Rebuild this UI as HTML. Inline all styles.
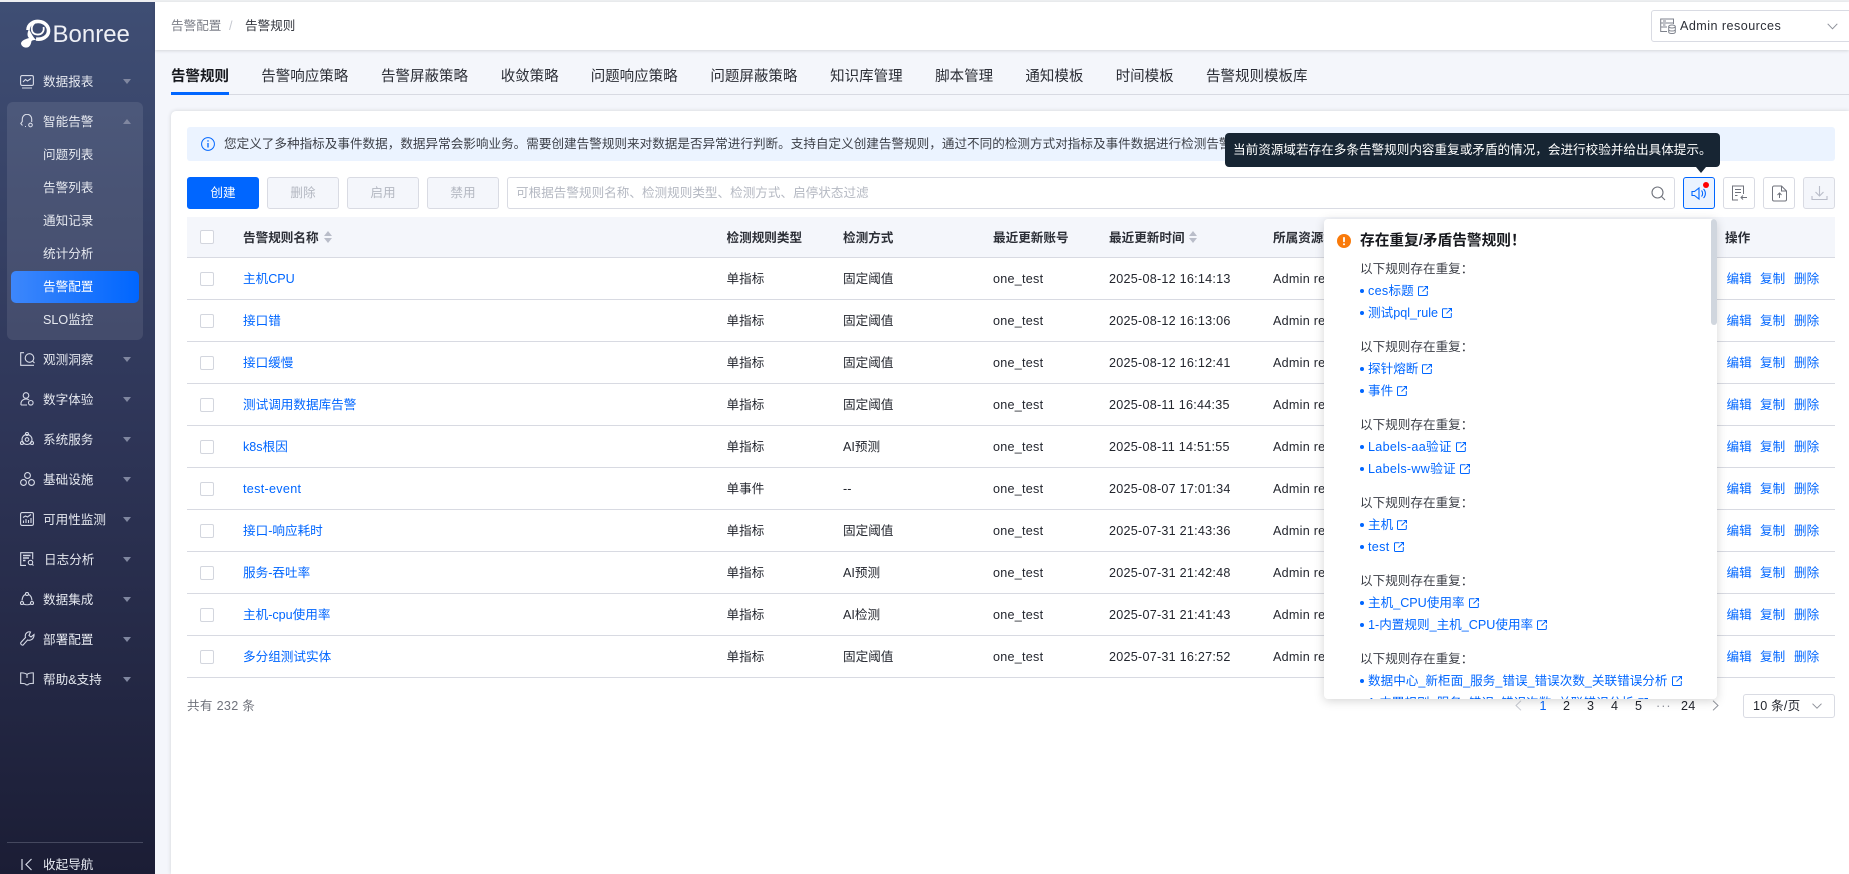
<!DOCTYPE html>
<html lang="zh-CN">
<head>
<meta charset="utf-8">
<title>告警规则</title>
<style>
*{box-sizing:border-box}
html,body{margin:0;padding:0;width:1849px;height:874px;overflow:hidden;background:#f4f6fb;font-family:"Liberation Sans","Noto Sans CJK SC",sans-serif;font-size:12.6px;color:#23262e}
div,span,svg{position:absolute}
#root{left:0;top:0;width:1849px;height:874px;overflow:hidden;background:#f4f6fb}
.t{white-space:nowrap;line-height:20px}
span.i,svg.i{position:static}
#top{left:0;top:0;width:1849px;height:2px;background:#eeeff2}
#side{left:0;top:2px;width:155px;height:872px;background:linear-gradient(180deg,#3f4e74 0%,#2e3557 50%,#1b1d35 100%)}
.m{left:43px;color:#e6e9f0;white-space:nowrap;line-height:20px;margin-top:1px}
.ar{left:123px;width:0;height:0;border-left:4px solid transparent;border-right:4px solid transparent;border-top:5px solid #8087a0}
.ic{left:20px;width:14px;height:14px;fill:none;stroke:#d6dae6;stroke-width:1.1}
#hd{top:2px;left:155px;width:1694px;height:48px;background:#fff;box-shadow:0 1px 3px rgba(0,0,0,.13)}
.tab{top:67px;font-size:14.5px;white-space:nowrap;line-height:20px;color:#2b2e36}
#card{left:171px;top:111px;width:1678px;height:763px;background:#fff;border-radius:5px 0 0 0;box-shadow:0 0 4px rgba(0,0,0,.14)}
.btn{top:177px;width:72px;height:32px;border-radius:3px;background:#f4f6fb;border:1px solid #d9dbe3;color:#b4b8c2;text-align:center;line-height:30px}
.ib{top:177px;width:32px;height:32px;border-radius:3px;border:1px solid #d9dbe3;background:#fff}
.row{left:187px;width:1648px;height:42px;border-bottom:1.4px solid #d8dae2;background:#fff}
.row>span{top:11px;white-space:nowrap;line-height:20px}
.row>span.cb{left:13px;top:14px;width:14px;height:14px;border:1px solid #d3d6de;border-radius:2px;background:#fff}
.hcb{left:200px;top:230px;width:14px;height:14px;border:1px solid #d3d6de;border-radius:2px;background:#fff}
.n{left:56px;color:#0066ff}
.ty{left:539.5px}.me{left:656px}.ac{left:806px;letter-spacing:.25px}.ti{left:922px;letter-spacing:.25px}.re{left:1086px;letter-spacing:.25px}
.a1{left:1539.5px;color:#0066ff}.a2{left:1573px;color:#0066ff}.a3{left:1607px;color:#0066ff}
.th{top:228px;font-weight:700;white-space:nowrap;line-height:20px;color:#2b2e36}
.up{width:0;height:0;border-left:4px solid transparent;border-right:4px solid transparent;border-bottom:5px solid #b9bdc9}
.dn{width:0;height:0;border-left:4px solid transparent;border-right:4px solid transparent;border-top:5px solid #b9bdc9}
#pop{left:1324px;top:219px;width:392.5px;height:480px;background:#fff;border-radius:4px;box-shadow:0 2px 10px rgba(0,0,0,.17);overflow:hidden;z-index:5}
.h{left:36px;white-space:nowrap;line-height:20px;color:#3a3d45}
.d{left:36px;width:4px;height:4px;border-radius:50%;background:#0066ff}
.lk{left:44px;white-space:nowrap;line-height:20px;color:#0066ff}
.lk svg{position:static;display:inline-block;width:10px;height:10px;margin-left:4px;vertical-align:-1px;fill:none;stroke:#0066ff;stroke-width:1}
.l{letter-spacing:.3px}
.pg{top:696px;white-space:nowrap;line-height:20px;color:#23262e;letter-spacing:.2px}
</style>
</head>
<body>
<div id="root">
<svg width="0" height="0" style="position:absolute"><defs><symbol id="x" viewBox="0 0 10 10"><path d="M5.5 .7H1.2a.7.7 0 0 0-.7.7v7.4a.7.7 0 0 0 .7.7h7.4a.7.7 0 0 0 .7-.7V5M4.500 5.500L9.300 .7M6.500 .5h3v3"/></symbol></defs></svg>

<div id="side"></div>
<div id="top"></div>

<!-- logo -->
<svg style="left:19px;top:19px" width="33" height="30" viewBox="0 0 33 30" fill="none">
<path d="M9 11C9 5 15 2 20 2.500C26 3 30 7.500 29.500 12.500C29 18 23 21 17 20" stroke="#fff" stroke-width="3.600"/>
<path d="M15.500 4C11 8 12 15 18 15.500C23 16 25.500 12 24.500 8" stroke="#fff" stroke-width="1.800"/>
<path d="M10 10C8 14 8 17 10 19C7 20 3 21 2 24C2 27 5 29 8 28.500C11 28 12 25 12.500 22C14 21 15 21 17 21C14 18 12 14 10 10Z" fill="#fff"/>
</svg>
<div class="t" style="left:52.500px;top:20px;font-size:24px;line-height:30px;color:#eef0f6;letter-spacing:0">Bonree</div>

<!-- panel -->
<div style="left:7px;top:102px;width:136px;height:238px;background:rgba(255,255,255,.09);border-radius:6px"></div>
<div style="left:11px;top:271px;width:128px;height:32px;border-radius:5px;background:linear-gradient(90deg,#3d87fb,#0066ff)"></div>

<!-- side menu -->
<div class="m" style="top:71px">数据报表</div><div class="ar" style="top:79px"></div>
<svg class="ic" style="top:75px" viewBox="0 0 14 14"><rect x=".6" y=".6" width="12.800" height="9.800" rx="1.500"/><path d="M3 7l2.500-2.500 2 1.500L11 3.500M2 13h10" /></svg>
<div class="m" style="top:111px">智能告警</div><div style="left:123px;top:119px;width:0;height:0;border-left:4px solid transparent;border-right:4px solid transparent;border-bottom:5px solid #8087a0"></div>
<svg class="ic" style="top:114px" viewBox="0 0 14 14"><path d="M2.500 11.500L.8 9.500 2.300 7.500V5a4.700 4.700 0 0 1 9.400 0v3M5 12.500h1"/><circle cx="10.500" cy="11" r="1.800"/></svg>
<div class="m" style="top:144px">问题列表</div>
<div class="m" style="top:177px">告警列表</div>
<div class="m" style="top:210px">通知记录</div>
<div class="m" style="top:243px">统计分析</div>
<div class="m" style="top:276px;color:#fff">告警配置</div>
<div class="m" style="top:309px">SLO监控</div>
<div class="m" style="top:349px">观测洞察</div><div class="ar" style="top:357px"></div>
<svg class="ic" style="top:352px;width:15px" viewBox="0 0 15 14"><path d="M4 .7H.7v12.600H5M3 13.300h11"/><circle cx="9.500" cy="6" r="4.300"/><path d="M12.500 9l2 2"/></svg>
<div class="m" style="top:389px">数字体验</div><div class="ar" style="top:397px"></div>
<svg class="ic" style="top:392px" viewBox="0 0 14 14"><circle cx="6" cy="3.500" r="2.800"/><path d="M1 13c-.5-4 2-6 5-6 1.500 0 2.500.5 3 1M1 13h6"/><circle cx="10.800" cy="10.800" r="2.300"/></svg>
<div class="m" style="top:429px">系统服务</div><div class="ar" style="top:437px"></div>
<svg class="ic" style="top:432px" viewBox="0 0 14 14"><circle cx="7" cy="7.500" r="5"/><circle cx="7" cy="2" r="1.500"/><circle cx="2" cy="11" r="1.500"/><circle cx="12" cy="11" r="1.500"/><circle cx="7" cy="7.500" r="1.800"/></svg>
<div class="m" style="top:469px">基础设施</div><div class="ar" style="top:477px"></div>
<svg class="ic" style="top:472px;width:15px;left:19.500px" viewBox="0 0 15 14"><circle cx="7.500" cy="3.500" r="2.900"/><circle cx="3.500" cy="10.500" r="2.900"/><circle cx="11.500" cy="10.500" r="2.900"/></svg>
<div class="m" style="top:509px">可用性监测</div><div class="ar" style="top:517px"></div>
<svg class="ic" style="top:512px" viewBox="0 0 14 14"><rect x=".6" y=".6" width="12.800" height="12.800" rx="1.500"/><path d="M3 5.500L5.500 4l2 1 3.500-2.500M3.500 11V8.500M6 11V7M8.500 11V8M11 11V6"/></svg>
<div class="m" style="top:549px;left:44px">日志分析</div><div class="ar" style="top:557px"></div>
<svg class="ic" style="top:552px" viewBox="0 0 14 14"><path d="M6 13.400H.7V.7h12v6.500"/><path d="M3 3.500h7.500M3 6h6M3 8.500h2.500" stroke-width="1.400"/><circle cx="10.500" cy="10.500" r="2.200"/><path d="M12 12.200l1.500 1.300"/></svg>
<div class="m" style="top:589px">数据集成</div><div class="ar" style="top:597px"></div>
<svg class="ic" style="top:592px" viewBox="0 0 14 14"><path d="M5.300 2.500C3.500 3.300 2.300 5.500 2 8.500M8.700 2.500C10.500 3.300 11.700 5.500 12 8.500M3.500 12c2 1 5 1 7 0"/><circle cx="7" cy="2" r="1.500"/><circle cx="2" cy="11" r="1.500"/><circle cx="12" cy="11" r="1.500"/></svg>
<div class="m" style="top:629px">部署配置</div><div class="ar" style="top:637px"></div>
<svg class="ic" style="top:631px;width:15px;height:15px" viewBox="0 0 15 15"><path d="M14 3.500L11 6 9 4.500 10.500 1C8 .2 5 2 5.300 5.500c0 .8.200 1 .2 1L.9 11.500c-.6 1 .2 2.800 2 2.700l4.700-5.200c3 1 6.600-1 6.400-5.500z"/></svg>
<div class="m" style="top:669px">帮助&amp;支持</div><div class="ar" style="top:677px"></div>
<svg class="ic" style="top:672px" viewBox="0 0 14 14"><path d="M7 2.500C5.500 1 3 .8.700.9v10.500c2.500-.1 4.500 0 5.500 1.400h1.600c1-1.400 3-1.500 5.500-1.400V.9C11 .8 8.500 1 7 2.500zM7 2.500V6"/></svg>
<div style="left:7px;top:842px;width:136px;height:1px;background:#45485f"></div>
<svg style="left:21px;top:858px" width="12" height="13" viewBox="0 0 12 13" fill="none" stroke="#d6dae6" stroke-width="1.200"><path d="M1 1v11M10.500 1L5 6.500l5.500 5.500"/></svg>
<div class="m" style="top:854px">收起导航</div>

<!-- header -->
<div id="hd"></div>
<div class="t" style="left:171px;top:16px;color:#7b7e87">告警配置</div>
<div class="t" style="left:229px;top:16px;color:#c4c7cf">/</div>
<div class="t" style="left:245px;top:16px;color:#34373f">告警规则</div>
<div style="left:1651px;top:10px;width:210px;height:32px;border:1px solid #d9dbe3;border-radius:3px;background:#fff"></div>
<svg style="left:1660px;top:18px" width="16" height="16" viewBox="0 0 16 16" fill="none" stroke="#7e828c" stroke-width="1"><path d="M13.500 6V1H.7v12.500H7M1 5h12.500M1 9h6M3 3h3M3 7h2.500"/><ellipse cx="12" cy="8.500" rx="3.300" ry="1.500"/><path d="M8.700 8.500v5.500c0 1 1.500 1.500 3.300 1.500s3.300-.5 3.300-1.500V8.500M8.700 11.500c0 1 1.500 1.500 3.300 1.500s3.300-.5 3.300-1.500"/></svg>
<div class="t" style="left:1680px;top:16px;letter-spacing:.45px;color:#2b2e36">Admin resources</div>
<svg style="left:1827px;top:23px" width="11" height="7" viewBox="0 0 11 7" fill="none" stroke="#8d9099" stroke-width="1"><path d="M.7.8l4.800 5 4.800-5"/></svg>

<!-- tabs -->
<div style="left:171px;top:94px;width:1678px;height:1px;background:#d8dae2"></div>
<div style="left:171px;top:92px;width:58px;height:3px;background:#0066ff"></div>
<div class="tab" style="left:171px;font-weight:700;color:#16181d">告警规则</div>
<div class="tab" style="left:261.300px">告警响应策略</div>
<div class="tab" style="left:381px">告警屏蔽策略</div>
<div class="tab" style="left:500.700px">收敛策略</div>
<div class="tab" style="left:590.700px">问题响应策略</div>
<div class="tab" style="left:710.400px">问题屏蔽策略</div>
<div class="tab" style="left:830.100px">知识库管理</div>
<div class="tab" style="left:935.100px">脚本管理</div>
<div class="tab" style="left:1025.400px">通知模板</div>
<div class="tab" style="left:1115.700px">时间模板</div>
<div class="tab" style="left:1206px">告警规则模板库</div>

<!-- card -->
<div id="card"></div>
<div style="left:187px;top:127px;width:1648px;height:34px;background:#ebf3ff;border-radius:3px"></div>
<svg style="left:201px;top:137px" width="14" height="14" viewBox="0 0 14 14" fill="none" stroke="#0066ff" stroke-width="1"><circle cx="7" cy="7" r="6.400"/><path d="M7 6v4.500M7 3.300v1.300" stroke-width="1.300"/></svg>
<div class="t" style="left:224px;top:134px;color:#3d4048">您定义了多种指标及事件数据，数据异常会影响业务。需要创建告警规则来对数据是否异常进行判断。支持自定义创建告警规则，通过不同的检测方式对指标及事件数据进行检测告警。</div>

<div class="btn" style="left:187px;background:#0066ff;border-color:#0066ff;color:#fff">创建</div>
<div class="btn" style="left:267px">删除</div>
<div class="btn" style="left:347px">启用</div>
<div class="btn" style="left:427px">禁用</div>
<div style="left:507px;top:177px;width:1168px;height:32px;border:1px solid #d9dbe3;border-radius:3px;background:#fff"></div>
<div class="t" style="left:516px;top:183px;color:#b4b8c2">可根据告警规则名称、检测规则类型、检测方式、启停状态过滤</div>
<svg style="left:1651px;top:186px" width="15" height="15" viewBox="0 0 15 15" fill="none" stroke="#6e717a" stroke-width="1.100"><circle cx="6.500" cy="6.500" r="5.500"/><path d="M10.500 10.500l3.500 3.500"/></svg>

<div class="ib" style="left:1683px;background:#ebf3ff;border-color:#0066ff"></div>
<svg style="left:1691px;top:185px" width="17" height="17" viewBox="0 0 17 17" fill="none" stroke="#0066ff" stroke-width="1.100"><path d="M1 6.500h2.500L8 3v11L3.500 10.500H1zM10.500 5.500c1.500 1.500 1.500 4.500 0 6M12.500 4c2.500 2.500 2.500 6.500 0 9"/></svg>
<div style="left:1702.500px;top:182px;width:6px;height:6px;border-radius:50%;background:#f00"></div>
<div class="ib" style="left:1723px"></div>
<svg style="left:1731px;top:185px" width="17" height="17" viewBox="0 0 17 17" fill="none" stroke="#6f727b" stroke-width="1"><path d="M7 15H1.500V1h11v8M4 4.500h6M4 7.500h6M4 10.500h2.500M16 12.500h-6M12 10.500l-2 2 2 2"/></svg>
<div class="ib" style="left:1763px"></div>
<svg style="left:1772px;top:185px" width="15" height="17" viewBox="0 0 15 17" fill="none" stroke="#6f727b" stroke-width="1"><path d="M9.500 1H2a1.500 1.500 0 0 0-1.500 1.500v12A1.500 1.500 0 0 0 2 16h11a1.500 1.500 0 0 0 1.500-1.500V6zM9.500 1v5h5M7.500 13V8M5.500 10l2-2 2 2"/></svg>
<div class="ib" style="left:1803px;background:#f4f6fb"></div>
<svg style="left:1811px;top:185px" width="17" height="16" viewBox="0 0 17 16" fill="none" stroke="#b9bdc9" stroke-width="1.100"><path d="M8.500 1v9.500M4.500 7l4 4 4-4M1 11v3.500h15V11"/></svg>

<!-- table head -->
<div style="left:187px;top:217px;width:1648px;height:41px;background:#f4f6fb;border-bottom:1.400px solid #d8dae2"></div>
<div class="hcb"></div>
<div class="th" style="left:243px">告警规则名称</div>
<div class="up" style="left:324px;top:231px"></div><div class="dn" style="left:324px;top:238px"></div>
<div class="th" style="left:726.500px">检测规则类型</div>
<div class="th" style="left:843px">检测方式</div>
<div class="th" style="left:993px">最近更新账号</div>
<div class="th" style="left:1109px">最近更新时间</div>
<div class="up" style="left:1189px;top:231px"></div><div class="dn" style="left:1189px;top:238px"></div>
<div class="th" style="left:1273px">所属资源域</div>
<div class="th" style="left:1725px">操作</div>

<!-- rows -->
<div class="row" style="top:258px"><span class="cb"></span><span class="n">主机CPU</span><span class="ty">单指标</span><span class="me">固定阈值</span><span class="ac">one_test</span><span class="ti">2025-08-12 16:14:13</span><span class="re">Admin resources</span><span class="a1">编辑</span><span class="a2">复制</span><span class="a3">删除</span></div>
<div class="row" style="top:300px"><span class="cb"></span><span class="n">接口错</span><span class="ty">单指标</span><span class="me">固定阈值</span><span class="ac">one_test</span><span class="ti">2025-08-12 16:13:06</span><span class="re">Admin resources</span><span class="a1">编辑</span><span class="a2">复制</span><span class="a3">删除</span></div>
<div class="row" style="top:342px"><span class="cb"></span><span class="n">接口缓慢</span><span class="ty">单指标</span><span class="me">固定阈值</span><span class="ac">one_test</span><span class="ti">2025-08-12 16:12:41</span><span class="re">Admin resources</span><span class="a1">编辑</span><span class="a2">复制</span><span class="a3">删除</span></div>
<div class="row" style="top:384px"><span class="cb"></span><span class="n">测试调用数据库告警</span><span class="ty">单指标</span><span class="me">固定阈值</span><span class="ac">one_test</span><span class="ti">2025-08-11 16:44:35</span><span class="re">Admin resources</span><span class="a1">编辑</span><span class="a2">复制</span><span class="a3">删除</span></div>
<div class="row" style="top:426px"><span class="cb"></span><span class="n">k8s根因</span><span class="ty">单指标</span><span class="me">AI预测</span><span class="ac">one_test</span><span class="ti">2025-08-11 14:51:55</span><span class="re">Admin resources</span><span class="a1">编辑</span><span class="a2">复制</span><span class="a3">删除</span></div>
<div class="row" style="top:468px"><span class="cb"></span><span class="n" style="letter-spacing:.3px">test-event</span><span class="ty">单事件</span><span class="me">--</span><span class="ac">one_test</span><span class="ti">2025-08-07 17:01:34</span><span class="re">Admin resources</span><span class="a1">编辑</span><span class="a2">复制</span><span class="a3">删除</span></div>
<div class="row" style="top:510px"><span class="cb"></span><span class="n">接口-响应耗时</span><span class="ty">单指标</span><span class="me">固定阈值</span><span class="ac">one_test</span><span class="ti">2025-07-31 21:43:36</span><span class="re">Admin resources</span><span class="a1">编辑</span><span class="a2">复制</span><span class="a3">删除</span></div>
<div class="row" style="top:552px"><span class="cb"></span><span class="n">服务-吞吐率</span><span class="ty">单指标</span><span class="me">AI预测</span><span class="ac">one_test</span><span class="ti">2025-07-31 21:42:48</span><span class="re">Admin resources</span><span class="a1">编辑</span><span class="a2">复制</span><span class="a3">删除</span></div>
<div class="row" style="top:594px"><span class="cb"></span><span class="n">主机-cpu使用率</span><span class="ty">单指标</span><span class="me">AI检测</span><span class="ac">one_test</span><span class="ti">2025-07-31 21:41:43</span><span class="re">Admin resources</span><span class="a1">编辑</span><span class="a2">复制</span><span class="a3">删除</span></div>
<div class="row" style="top:636px"><span class="cb"></span><span class="n">多分组测试实体</span><span class="ty">单指标</span><span class="me">固定阈值</span><span class="ac">one_test</span><span class="ti">2025-07-31 16:27:52</span><span class="re">Admin resources</span><span class="a1">编辑</span><span class="a2">复制</span><span class="a3">删除</span></div>

<!-- footer -->
<div class="t" style="left:187px;top:696px;color:#70737c;letter-spacing:.3px">共有 232 条</div>
<svg style="left:1515px;top:700px" width="7" height="11" viewBox="0 0 7 11" fill="none" stroke="#c6c9d1" stroke-width="1"><path d="M6 .7L1 5.500l5 4.800"/></svg>
<div class="pg" style="left:1539.500px;color:#0066ff">1</div>
<div class="pg" style="left:1563px">2</div>
<div class="pg" style="left:1587px">3</div>
<div class="pg" style="left:1611px">4</div>
<div class="pg" style="left:1635px">5</div>
<div class="pg" style="left:1656px;color:#8d9099;letter-spacing:1px">···</div>
<div class="pg" style="left:1681px">24</div>
<svg style="left:1712px;top:700px" width="7" height="11" viewBox="0 0 7 11" fill="none" stroke="#8d9099" stroke-width="1"><path d="M1 .7l5 4.800-5 4.800"/></svg>
<div style="left:1743px;top:694px;width:92px;height:24px;border:1px solid #d9dbe3;border-radius:3px;background:#fff"></div>
<div class="pg" style="left:1753px">10 条/页</div>
<svg style="left:1812px;top:703px" width="10" height="6" viewBox="0 0 10 6" fill="none" stroke="#8d9099" stroke-width="1"><path d="M.5.7l4.500 4.500L9.500.7"/></svg>

<!-- popover -->
<div id="pop">
<svg style="left:13px;top:15px" width="14" height="14" viewBox="0 0 14 14"><circle cx="7" cy="7" r="7" fill="#f97a0a"/><rect x="6.100" y="3" width="1.800" height="5.200" rx=".8" fill="#fff"/><circle cx="7" cy="10.300" r="1" fill="#fff"/></svg>
<div class="t" style="left:36px;top:12px;font-size:14.700px;font-weight:700;color:#16181d">存在重复/矛盾告警规则！</div>

<div class="h" style="top:40px">以下规则存在重复：</div>
<div class="d" style="top:70px"></div><div class="lk" style="top:62px"><span class="i l">ces</span><span class="i">标题</span><svg><use href="#x"/></svg></div>
<div class="d" style="top:92px"></div><div class="lk" style="top:84px">测试pql_rule<svg><use href="#x"/></svg></div>

<div class="h" style="top:118px">以下规则存在重复：</div>
<div class="d" style="top:148px"></div><div class="lk" style="top:140px">探针熔断<svg><use href="#x"/></svg></div>
<div class="d" style="top:170px"></div><div class="lk" style="top:162px">事件<svg><use href="#x"/></svg></div>

<div class="h" style="top:196px">以下规则存在重复：</div>
<div class="d" style="top:226px"></div><div class="lk l" style="top:218px">Labels-aa验证<svg><use href="#x"/></svg></div>
<div class="d" style="top:248px"></div><div class="lk l" style="top:240px">Labels-ww验证<svg><use href="#x"/></svg></div>

<div class="h" style="top:274px">以下规则存在重复：</div>
<div class="d" style="top:304px"></div><div class="lk" style="top:296px">主机<svg><use href="#x"/></svg></div>
<div class="d" style="top:326px"></div><div class="lk l" style="top:318px">test<svg><use href="#x"/></svg></div>

<div class="h" style="top:352px">以下规则存在重复：</div>
<div class="d" style="top:382px"></div><div class="lk" style="top:374px">主机_CPU使用率<svg><use href="#x"/></svg></div>
<div class="d" style="top:404px"></div><div class="lk" style="top:396px">1-内置规则_主机_CPU使用率<svg><use href="#x"/></svg></div>

<div class="h" style="top:430px">以下规则存在重复：</div>
<div class="d" style="top:460px"></div><div class="lk" style="top:452px">数据中心_新柜面_服务_错误_错误次数_关联错误分析<svg><use href="#x"/></svg></div>
<div class="d" style="top:482px"></div><div class="lk" style="top:474px">1-内置规则_服务_错误_错误次数_关联错误分析<svg><use href="#x"/></svg></div>

<div style="right:0;top:0;width:6px;height:106px;background:#d0d6de;border-radius:3px"></div>
</div>

<!-- tooltip -->
<div style="left:1225px;top:133px;width:495px;height:34px;background:#172533;border-radius:4px;z-index:6"></div>
<div style="left:1695.500px;top:167px;width:0;height:0;border-left:5.500px solid transparent;border-right:5.500px solid transparent;border-top:6px solid #172533;z-index:6"></div>
<div class="t" style="left:1233px;top:140px;color:#fff;z-index:7">当前资源域若存在多条告警规则内容重复或矛盾的情况，会进行校验并给出具体提示。</div>
</div>
</body>
</html>
